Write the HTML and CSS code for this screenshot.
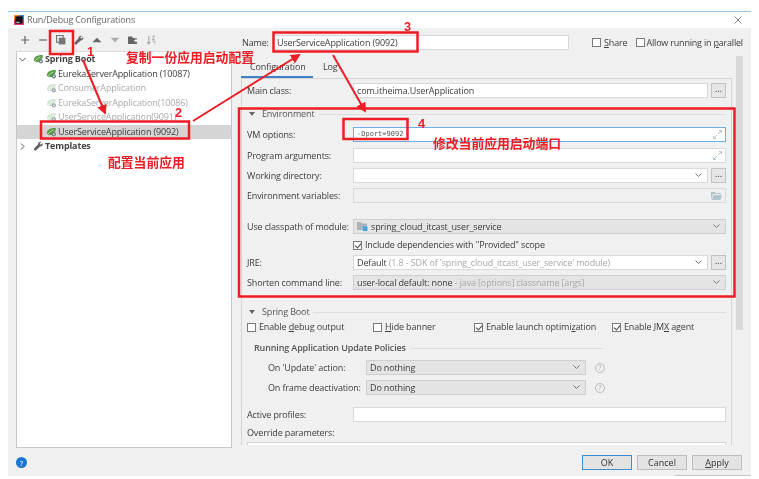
FILE: index.html
```html
<!DOCTYPE html>
<html lang="zh">
<head>
<meta charset="utf-8">
<title>Run/Debug Configurations</title>
<link rel="stylesheet" href="styles.css">
</head>
<body>
<svg class="defs" width="0" height="0" aria-hidden="true">
  <symbol id="boot" viewBox="0 0 14 12">
    <path d="M1 8C1 3 6 .8 12.500 1 12.500 6 10 10 5.500 10 3.500 10 2 9.500 1 8Z" fill="currentColor"/>
    <path d="M2 9.500C4 6.500 6.500 4.500 9.500 3.500" stroke="#fff" stroke-width=".7" fill="none"/>
    <circle cx="10" cy="9" r="2.700" fill="#6f7d8a"/>
    <circle cx="10" cy="9" r="1" fill="#fff"/>
  </symbol>
  <symbol id="wrench" viewBox="0 0 12 12">
    <path d="M11 2.500 8.800 4.500 7.500 3.200 9.500 1C7.500.2 5.300 1.500 5.500 4L1 8.800C.3 9.600.5 10.500 1 11S2.400 11.700 3.200 11L8 6.500C10.500 6.800 11.800 4.500 11 2.500Z" fill="#5f6468"/>
  </symbol>
</svg>
<div class="shot">
  <div class="window">
    <header class="titlebar">
      <svg class="appicon" viewBox="0 0 11 11"><rect width="11" height="11" fill="#e8366f"/><path d="M0 0H6L0 6Z" fill="#f28a1e"/><path d="M11 0V6L6 0Z" fill="#2a8fd8"/><rect x="1.500" y="1.500" width="8" height="8" fill="#111"/><rect x="2.500" y="7.500" width="3.500" height="1" fill="#fff"/></svg>
      <span class="title">Run/Debug Configurations</span>
      <svg class="close" viewBox="0 0 9 9"><path d="M.5.5 8.500 8.500M8.500.5.500 8.500" stroke="#777" fill="none"/></svg>
    </header>
    <div class="content">
      <aside class="side">
        <div class="toolbar">
          <svg class="tool" viewBox="0 0 9 9"><path d="M4.500 1V8M1 4.500H8" stroke="#666" stroke-width="1.100"/></svg>
          <svg class="tool" viewBox="0 0 9 9"><path d="M1 4.500H8" stroke="#666" stroke-width="1.100"/></svg>
          <svg class="tool" viewBox="0 0 9 9"><rect x=".5" y=".5" width="6" height="6" fill="none" stroke="#777"/><rect x="2.500" y="2.500" width="6" height="6" fill="#777"/></svg>
          <svg class="tool"><use href="#wrench"/></svg>
          <svg class="tool" viewBox="0 0 9 9"><path d="M.5 6.500 4.500 2.500 8.500 6.500Z" fill="#666"/></svg>
          <svg class="tool" viewBox="0 0 9 9"><path d="M.5 2.500 4.500 6.500 8.500 2.500Z" fill="#aaa"/></svg>
          <svg class="tool" viewBox="0 0 10 9"><path d="M0 1H4L5 2.500H9V8.500H0Z" fill="#666"/><path d="M6 5H10M8 3V7" stroke="#fff"/></svg>
          <svg class="tool" viewBox="0 0 9 9"><path d="M2.500 1V8M1 6.500 2.500 8 4 6.500" stroke="#aaa" fill="none"/><path d="M5.500 1H8L5.500 4H8M5.500 5.500H8V8" stroke="#aaa" fill="none" stroke-width=".8"/></svg>
        </div>
        <ul class="tree">
          <li class="node root"><svg class="twist" viewBox="0 0 7 7"><path d="M.5 2 3.500 5 6.500 2" stroke="#555" fill="none"/></svg><svg class="leaf"><use href="#boot"/></svg>Spring Boot</li>
          <li class="node child"><svg class="leaf"><use href="#boot"/></svg>EurekaServerApplication (10087)</li>
          <li class="node child off"><svg class="leaf"><use href="#boot"/></svg>ConsumerApplication</li>
          <li class="node child off"><svg class="leaf"><use href="#boot"/></svg>EurekaServerApplication(10086)</li>
          <li class="node child off"><svg class="leaf"><use href="#boot"/></svg>UserServiceApplication(9091)</li>
          <li class="node child selected"><svg class="leaf"><use href="#boot"/></svg>UserServiceApplication (9092)</li>
          <li class="node root"><svg class="twist" viewBox="0 0 7 7"><path d="M2 .5 5 3.500 2 6.500" stroke="#555" fill="none"/></svg><svg class="leaf"><use href="#wrench"/></svg>Templates</li>
        </ul>
      </aside>
      <main class="main">
        <div class="namerow">
          <label class="namelabel">Name:</label>
          <div class="field namefield">UserServiceApplication (9092)</div>
          <label class="check share"><i class="box"></i><span><u>S</u>hare</span></label>
          <label class="check parallel"><i class="box"></i><span>Allow running in <u>p</u>arallel</span></label>
        </div>
        <div class="lower">
          <div class="tabwrap">
            <nav class="tabs"><span class="tab current-tab">Configuration</span><span class="tab">Log</span></nav>
            <div class="panel">
              <div class="row first"><span class="lab">Main class:</span><div class="field grow">com.itheima.UserApplication</div><button class="more">...</button></div>
              <div class="section envtitle"><i class="tri"></i><span>Environment</span><b class="rule"></b></div>
              <div class="rows">
                <div class="row"><span class="lab">VM options:</span><div class="field grow focus mono">-Dport=9092<svg class="expand" viewBox="0 0 9 9"><path d="M5 4 8 1M6 .5H8.500V3M4 5 1 8M.5 6V8.500H3" stroke="#b5c7d4" fill="none"/></svg></div></div>
                <div class="row args"><span class="lab">Program arguments:</span><div class="field grow"><svg class="expand" viewBox="0 0 9 9"><path d="M5 4 8 1M6 .5H8.500V3M4 5 1 8M.5 6V8.500H3" stroke="#b5c7d4" fill="none"/></svg></div></div>
                <div class="row"><span class="lab">Working directory:</span><div class="field grow"><svg class="chev" viewBox="0 0 7 4"><path d="M.5.5 3.500 3.500 6.500.5" stroke="#777" fill="none"/></svg></div><button class="more">...</button></div>
                <div class="row"><span class="lab">Environment variables:</span><div class="field grow disabled"><svg class="folder" viewBox="0 0 11 8"><path d="M0 0H4L5 1H10V2H2L0 8ZM2.500 3H11L9.500 8H.8Z" fill="#b3c2cc"/></svg></div></div>
                <div class="row gapbig"><span class="lab">Use classpath of module:</span><div class="field grow select"><svg class="mod" viewBox="0 0 11 9"><path d="M0 0H4L5 1.500H10V8H0Z" fill="#a9b4bd"/><rect x="6" y="4.500" width="4.500" height="4.500" fill="#3ea6e0"/></svg>spring_cloud_itcast_user_service<svg class="chev" viewBox="0 0 7 4"><path d="M.5.5 3.500 3.500 6.500.5" stroke="#777" fill="none"/></svg></div></div>
                <label class="check include"><i class="box on"></i><span>Include dependencies with "Provided" scope</span></label>
                <div class="row"><span class="lab">JRE:</span><div class="field grow">Default&nbsp;<em>(1.8 - SDK of 'spring_cloud_itcast_user_service' module)</em><svg class="chev" viewBox="0 0 7 4"><path d="M.5.5 3.500 3.500 6.500.5" stroke="#777" fill="none"/></svg></div><button class="more">...</button></div>
                <div class="row"><span class="lab">Shorten command line:</span><div class="field grow select">user-local default: none&nbsp;<em>- java [options] classname [args]</em><svg class="chev" viewBox="0 0 7 4"><path d="M.5.5 3.500 3.500 6.500.5" stroke="#777" fill="none"/></svg></div></div>
              </div>
              <div class="section boottitle"><i class="tri"></i><span>Spring Boot</span><b class="rule"></b></div>
              <div class="checks">
                <label class="check c1"><i class="box"></i><span>Enable <u>d</u>ebug output</span></label>
                <label class="check c2"><i class="box"></i><span><u>H</u>ide banner</span></label>
                <label class="check c3"><i class="box on"></i><span>Enable launch optimi<u>z</u>ation</span></label>
                <label class="check c4"><i class="box on"></i><span>Enable JM<u>X</u> agent</span></label>
              </div>
              <div class="section policies"><span>Running Application Update Policies</span><b class="rule"></b></div>
              <div class="row policy"><span class="plab">On 'Update' action:</span><div class="field select pselect">Do nothing<svg class="chev" viewBox="0 0 7 4"><path d="M.5.5 3.500 3.500 6.500.5" stroke="#777" fill="none"/></svg></div><span class="hint">?</span></div>
              <div class="row policy"><span class="plab">On frame deactivation:</span><div class="field select pselect">Do nothing<svg class="chev" viewBox="0 0 7 4"><path d="M.5.5 3.500 3.500 6.500.5" stroke="#777" fill="none"/></svg></div><span class="hint">?</span></div>
              <div class="row profiles"><span class="lab">Active profiles:</span><div class="field grow"></div></div>
              <div class="override">Override parameters:</div>
              <div class="table"></div>
            </div>
          </div>
          <div class="scroll"></div>
        </div>
      </main>
    </div>
    <footer class="footer">
      <span class="help">?</span>
      <button class="btn ok">OK</button>
      <button class="btn">Cancel</button>
      <button class="btn"><u>A</u>pply</button>
    </footer>
  </div>
  <svg class="marks" viewBox="0 0 759 479" aria-hidden="true">
    <defs><marker id="head" markerWidth="5" markerHeight="5" refX="4" refY="2.500" orient="auto"><path d="M0 0 5 2.500 0 5Z" fill="#ee1c25"/></marker></defs>
    <g fill="none" stroke="#ee1c25" stroke-width="2.500">
      <rect x="50" y="31" width="23" height="23"/>
      <rect x="41" y="121.500" width="148" height="17"/>
      <rect x="273.500" y="32.500" width="144" height="19"/>
      <rect x="343.500" y="119" width="64" height="20"/>
      <rect x="239" y="108.500" width="495.500" height="188"/>
      <path d="M83 60 105 113" marker-end="url(#head)" stroke-width="2"/>
      <path d="M193 121 299 55" marker-end="url(#head)" stroke-width="2"/>
      <path d="M333 55 365 111" marker-end="url(#head)" stroke-width="2"/>
    </g>
  </svg>
  <span class="note n1">1</span>
  <span class="note n2">2</span>
  <span class="note n3">3</span>
  <span class="note n4">4</span>
  <span class="note copy">复制一份应用启动配置</span>
  <span class="note current">配置当前应用</span>
  <span class="note port">修改当前应用启动端口</span>
</div>
</body>
</html>
```
FILE: styles.css
```css
* { box-sizing: border-box; }
html, body { margin: 0; background: #fff; }
body { font: 9px/12px "Open Sans", "Noto Sans", sans-serif; letter-spacing: -.14px; color: #3c3c3c; }
.defs { position: absolute; }
.shot { position: relative; width: 759px; height: 479px; overflow: hidden; filter: blur(.3px); }
.window { margin: 11px 8px 0; width: 743px; height: 465px; background: #f0f0f0; border-top: 1px solid #9cc6e8; display: flex; flex-direction: column; }
.titlebar { height: 16px; background: #fff; display: flex; align-items: center; padding: 0 9px 0 6px; flex: none; }
.appicon { width: 10px; height: 10px; margin-right: 3px; }
.title { color: #666; flex: 1; }
.close { width: 8px; height: 8px; }
.content { display: flex; height: 422px; flex: none; overflow: hidden; }
.side { width: 233px; padding-left: 8px; flex: none; display: flex; flex-direction: column; }
.toolbar { height: 23px; display: flex; align-items: center; padding-left: 4px; gap: 8px; }
.tool { width: 10px; height: 10px; }
.tree { list-style: none; margin: 0; padding: 0; width: 216px; height: 397px; background: #fff; border: 1px solid #c8c8c8; border-top-color: #ddd; }
.node { height: 14.500px; display: flex; align-items: center; white-space: nowrap; }
.root { font-weight: 700; padding-left: 1px; color: #444; }
.twist { width: 7px; height: 7px; margin: 0 7px 0 1px; }
.leaf { width: 11px; height: 10px; color: #5a9f48; margin-right: 1px; }
.child { padding-left: 29px; }
.off { color: #aaa; }
.off .leaf { color: #c4dfc0; opacity: .7; }
.selected { background: #d5d5d5; }
.main { flex: 1; min-width: 0; display: flex; flex-direction: column; }
.namerow { height: 28px; padding-top: 7px; display: flex; align-items: flex-start; flex: none; }
.namelabel { width: 31px; margin-left: 1px; line-height: 15px; }
.field { height: 15px; line-height: 13px; background: #fff; border: 1px solid #d9d9d9; padding: 0 3px; display: flex; align-items: center; white-space: nowrap; position: relative; }
.namefield { width: 296px; }
.check { display: flex; align-items: center; gap: 3px; white-space: nowrap; }
.box { width: 9px; height: 9px; background: #fff; border: 1px solid #7a7a7a; display: block; flex: none; position: relative; }
.box.on::after { content: ""; position: absolute; left: 1.500px; top: .5px; width: 3px; height: 5px; border: solid #444; border-width: 0 1px 1px 0; transform: rotate(40deg); }
.share { margin-left: 23px; line-height: 15px; }
.parallel { margin-left: 8px; gap: 2px; line-height: 15px; letter-spacing: -.2px; }
.lower { display: flex; flex: 1; min-height: 0; }
.tabwrap { width: 491px; margin-bottom: 5px; display: flex; flex-direction: column; overflow: hidden; }
.tabs { height: 22px; display: flex; flex: none; }
.tab { padding: 5px 0 0 10px; width: 82px; }
.current-tab { width: 72px; padding-left: 9px; border-bottom: 2px solid #3f82c9; height: 22px; }
.panel { flex: 1; border: 1px solid #d4d4d4; border-bottom: 0; padding: 0 5px; min-height: 0; overflow: hidden; }
.row { display: flex; height: 15px; align-items: center; flex: none; }
.first { margin-top: 4px; }
.lab { width: 106px; flex: none; white-space: nowrap; }
.grow { flex: 1; min-width: 0; }
.more { width: 15px; height: 15px; margin-left: 3px; padding: 0 0 3px; font: 9px/10px "Open Sans", sans-serif; background: #e6e6e6; border: 1px solid #c2c2c2; color: #333; flex: none; }
.section { display: flex; align-items: center; height: 12px; gap: 4px; white-space: nowrap; color: #555; }
.tri { width: 0; height: 0; border: 3px solid transparent; border-top: 4px solid #666; border-bottom: 0; margin: 0 3px 0 2px; }
.rule { flex: 1; height: 1px; background: #ddd; font-weight: 400; }
.envtitle { margin-top: 10px; }
.rows { display: flex; flex-direction: column; gap: 5px; margin-top: 7px; }
.args { margin-top: 1px; }
.focus { border: 1px solid #6fb0e4; }
.mono { font: 7px/13px "DejaVu Sans Mono", monospace; letter-spacing: 0; color: #555; }
.disabled { background: #f0f0f0; }
.select { background: #e4e4e4; border-color: #cfcfcf; }
.field em { font-style: normal; color: #a8a8a8; }
.expand { width: 9px; height: 9px; position: absolute; right: 3px; top: 2px; }
.chev { width: 7px; height: 4px; position: absolute; right: 5px; top: 4px; }
.folder { width: 11px; height: 8px; position: absolute; right: 3px; top: 3px; }
.mod { width: 11px; height: 9px; margin-right: 3px; flex: none; }
.gapbig { margin-top: 11px; }
.include { margin: -1px 0 -2px 106px; height: 14px; }
.boottitle { margin-top: 16px; }
.checks { display: flex; margin-top: 2px; height: 14px; }
.c1 { width: 126px; }
.c2 { width: 101px; }
.c3 { width: 138px; }
.policies { margin: 8px 123px 0 7px; font-weight: 600; gap: 5px; }
.policy { margin-top: 5px; }
.policies + .policy { margin-top: 6px; }
.plab { width: 119px; padding-left: 21px; flex: none; white-space: nowrap; }
.pselect { width: 220px; }
.hint { width: 10px; height: 10px; border: 1px solid #bbb; border-radius: 50%; font-size: 7px; line-height: 8px; text-align: center; color: #aaa; margin-left: 9px; }
.profiles { margin-top: 12px; }
.override { margin-top: 5px; height: 12px; }
.table { margin-top: 3px; height: 30px; background: #fff; border: 1px solid #d4d4d4; }
.scroll { width: 7px; height: 274px; margin: 0 0 0 4px; background: #d9d9d9; }
.footer { flex: 1; display: flex; align-items: flex-start; padding: 5px 9px 0 8px; gap: 5px; position: relative; }
.footer::after { content: ""; position: absolute; right: 0; bottom: 0; width: 76px; height: 1px; background: #c4c4c4; }
.help { width: 11px; height: 11px; margin: 2px auto 0 0; border-radius: 50%; background: #1976d2; color: #fff; font-size: 8px; line-height: 11px; text-align: center; }
.btn { width: 50px; height: 15px; padding: 0; font: 9px/13px "Open Sans", sans-serif; color: #333; background: #e3e3e3; border: 1px solid #bdbdbd; }
.ok { border: 1px solid #3c8fd4; }
.marks { position: absolute; inset: 0; width: 759px; height: 479px; }
.note { position: absolute; color: #ee1c25; font-family: "Noto Sans CJK SC", sans-serif; font-weight: 700; font-size: 12.800px; line-height: 16px; letter-spacing: 0; white-space: nowrap; }
.n1 { left: 87px; top: 44px; font-family: "Liberation Sans", sans-serif; }
.n2 { left: 175px; top: 105px; font-family: "Liberation Sans", sans-serif; }
.n3 { left: 404px; top: 19px; font-family: "Liberation Sans", sans-serif; }
.n4 { left: 418px; top: 116px; font-family: "Liberation Sans", sans-serif; }
.copy { left: 126px; top: 49px; }
.current { left: 108px; top: 154px; }
.port { left: 433px; top: 135px; }
```
